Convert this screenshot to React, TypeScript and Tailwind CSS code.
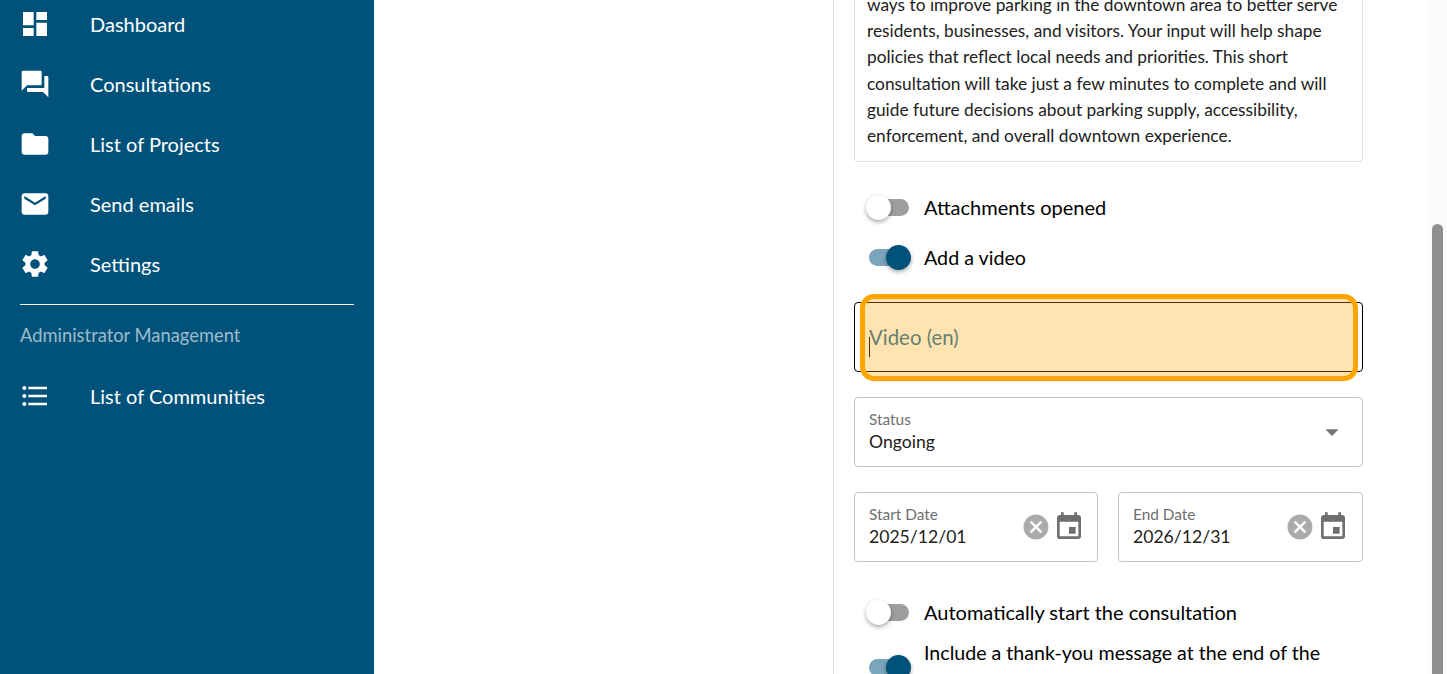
import { MdDashboard, MdForum, MdFolder, MdEmail, MdSettings, MdFormatListBulleted, MdCancel, MdEvent, MdArrowDropDown } from 'react-icons/md';
import type { IconType } from 'react-icons';

const navItems: { label: string; icon: IconType }[] = [
  { label: 'Dashboard', icon: MdDashboard },
  { label: 'Consultations', icon: MdForum },
  { label: 'List of Projects', icon: MdFolder },
  { label: 'Send emails', icon: MdEmail },
  { label: 'Settings', icon: MdSettings },
];

function NavRow({ label, icon: Icon }: { label: string; icon: IconType }) {
  return (
    <div className="flex h-[60px] items-center pl-[19px] text-white">
      <Icon className="h-8 w-8 shrink-0" />
      <span className="ml-[39px] text-[20px] leading-none">{label}</span>
    </div>
  );
}

function Toggle({ on }: { on: boolean }) {
  return (
    <div className="relative h-[26px] w-[46px] shrink-0">
      <div className={on ? 'absolute left-[3px] top-[4px] h-[17px] w-[36px] rounded-full bg-[#7aa5bd]' : 'absolute left-[3px] top-[4px] h-[17px] w-[40px] rounded-full bg-[#9e9e9e]'} />
      <div className={on ? 'absolute left-[20px] top-0 h-[25px] w-[25px] rounded-full bg-[#00527a] shadow-[0_2px_4px_rgba(0,0,0,0.35)]' : 'absolute left-0 top-0 h-[25px] w-[25px] rounded-full bg-white shadow-[0_2px_4px_rgba(0,0,0,0.35)]'} />
    </div>
  );
}

function FieldText({ label, value }: { label: string; value: string }) {
  return (
    <div className="flex-1 pt-px">
      <div className="text-[15.4px] leading-[18px] text-[#6f6f6f]">{label}</div>
      <div className="mt-px text-[17.6px] leading-[26px] text-[#212121]">{value}</div>
    </div>
  );
}

function DateField({ label, value, className }: { label: string; value: string; className: string }) {
  return (
    <div className={`flex h-[70px] items-center rounded border border-[#c4c4c4] pl-[14px] ${className}`}>
      <FieldText label={label} value={value} />
      <MdCancel className="h-[30px] w-[30px] text-[#ababab]" />
      <MdEvent className="ml-[2px] h-8 w-8 text-[#6e6e6e]" />
    </div>
  );
}

export default function App() {
  return (
    <div className="flex h-[674px] w-[1447px] overflow-hidden bg-white font-['Lato','Liberation_Sans',sans-serif]">
      {/* Sidebar */}
      <aside className="w-[374px] shrink-0 bg-[#00527a]">
        <div className="-mt-[6px]">
          {navItems.map((item) => (
            <NavRow key={item.label} {...item} />
          ))}
          <div className="mx-5 mt-[10px] border-t border-white" />
          <div className="ml-5 mt-[20px] text-[18.35px] leading-[20px] text-[#9dbccb]">Administrator Management</div>
          <div className="mt-[21px]">
            <NavRow label="List of Communities" icon={MdFormatListBulleted} />
          </div>
        </div>
      </aside>

      <div className="w-[459px] shrink-0" />

      {/* Form panel */}
      <main className="relative flex-1 border-l border-[#e0e0e0]">
        <div className="w-[529px] pl-5">
          <div className="-mt-[9px] rounded border border-[#e0e0e0] pl-[12px] pr-[13px] pb-[12px] text-[17.3px] leading-[26.2px] text-[#212121]">
            <p>
              ways to improve parking in the downtown area to better serve residents, businesses, and visitors. Your input will help shape policies that reflect local needs and priorities. This short consultation will take just a few minutes to complete and will guide future decisions about parking supply, accessibility, enforcement, and overall downtown experience.
            </p>
          </div>

          <div className="ml-[12px] mt-[33px] flex h-[26px] items-center gap-[12px] text-[20px] text-black">
            <Toggle on={false} />
            <span className="pb-[2px]">Attachments opened</span>
          </div>
          <div className="ml-[12px] mt-[24px] flex h-[26px] items-center gap-[12px] text-[19.7px] text-black">
            <Toggle on />
            <span>Add a video</span>
          </div>

          <div className="mt-[31px] flex h-[70px] items-center rounded border border-black pl-[14px] text-[20.4px] text-[#1f6f9f]">
            <span>Video (en)</span>
          </div>

          <div className="mt-[25px] flex h-[70px] items-center justify-between rounded border border-[#c4c4c4] pl-[14px] pr-[14px]">
            <FieldText label="Status" value="Ongoing" />
            <MdArrowDropDown className="h-8 w-8 text-[#757575]" />
          </div>

          <div className="mt-[25px] flex gap-5">
            <DateField className="w-[244px] shrink-0 pr-[12px]" label="Start Date" value="2025/12/01" />
            <DateField className="flex-1 pr-[13px]" label="End Date" value="2026/12/31" />
          </div>

          <div className="ml-[12px] mt-[38px] flex h-[26px] items-center gap-[12px] text-[20px] text-black">
            <Toggle on={false} />
            <span className="pb-[2px]">Automatically start the consultation</span>
          </div>
          <div className="ml-[12px] mt-[12px] flex items-center gap-[12px] text-[19.6px] leading-[30px] text-black">
            <Toggle on />
            <span className="w-[420px]">Include a thank-you message at the end of the consultation</span>
          </div>
        </div>

        {/* Text caret, tinted by the highlight above it */}
        <div className="absolute left-[35px] top-[337px] h-[20px] w-px bg-black" />
        {/* Highlight around the video field */}
        <div className="absolute left-[26px] top-[294px] h-[87px] w-[498px] rounded-[14px] border-[5px] border-[#ffa500] bg-[#ffa500]/30" />

        {/* Scrollbar */}
        <div className="absolute right-0 top-0 h-full w-[19px] bg-[#fafafa]">
          <div className="ml-[4px] mt-[224px] h-[470px] w-[11px] rounded-full bg-[#8f8f8f]" />
        </div>
      </main>
    </div>
  );
}
